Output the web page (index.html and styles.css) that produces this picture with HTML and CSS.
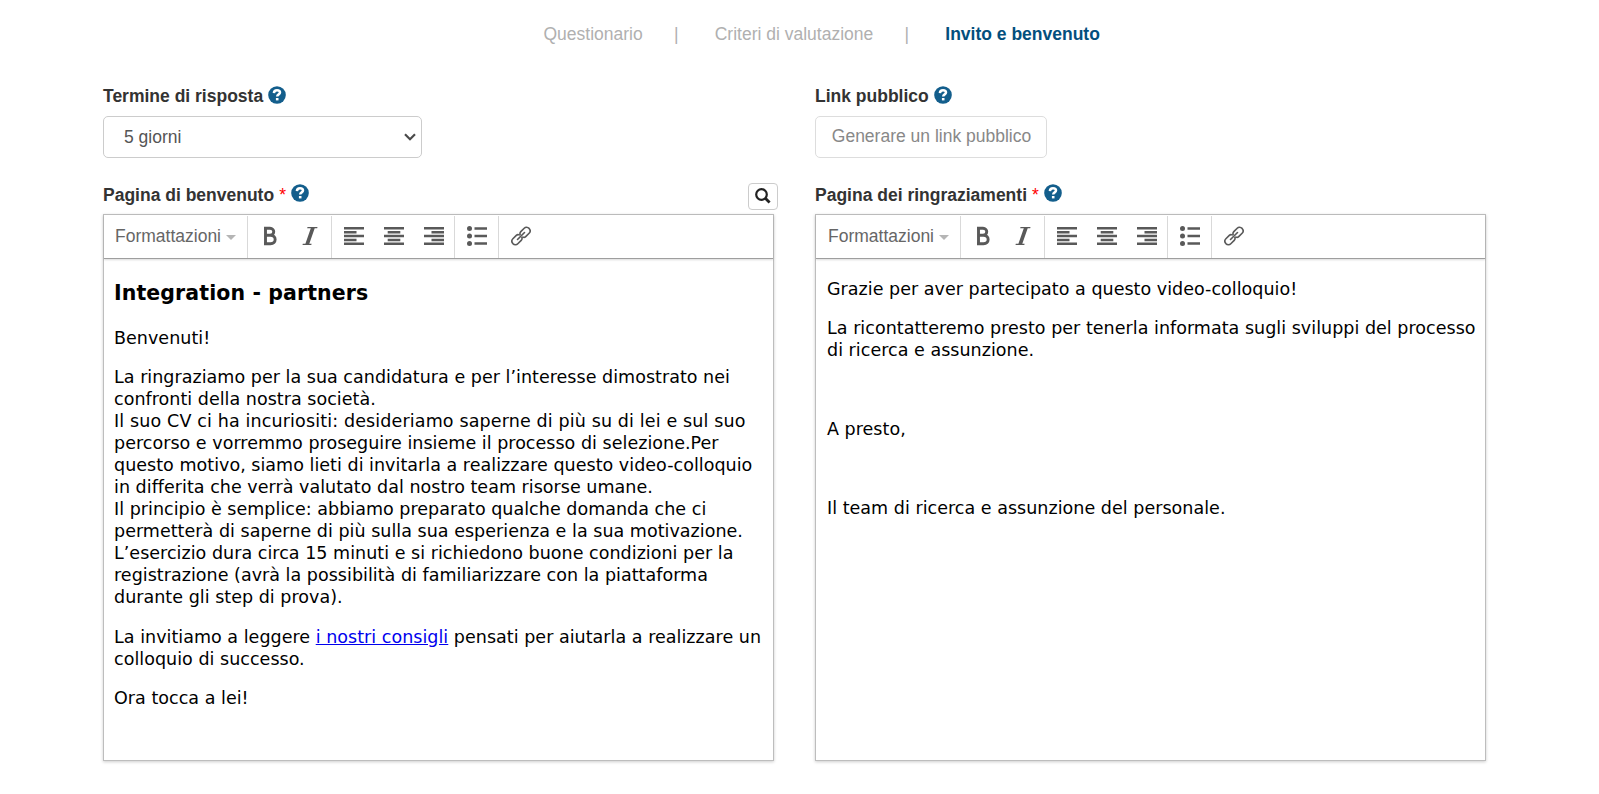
FILE: index.html
```html
<!DOCTYPE html>
<html lang="it">
<head>
  <meta charset="UTF-8">
  <meta name="viewport" content="width=device-width, initial-scale=1.0">
  <title>Invito e benvenuto</title>
  <link rel="stylesheet" href="styles.css">
</head>
<body>

  <!-- Shared icons -->
  <svg class="sprite">
    <symbol id="help" viewBox="0 0 18 18">
      <circle cx="9" cy="9" r="8.8" fill="#135e8c"/>
      <path d="M5.900 7.100C6 4.900 7.300 4.300 9 4.300c1.900 0 3 .9 3 2.300C12 8.500 9.200 8.300 9.200 10.600" fill="none" stroke="#fff" stroke-width="2.500"/>
      <rect x="7.900" y="12" width="2.600" height="2.400" fill="#fff"/>
    </symbol>
    <symbol id="bold" viewBox="0 0 20 20">
      <path d="M5.500 1v18M4 2.300h6c5 0 5 7 0 7H5.500h5c6.200 0 6.200 8.400 0 8.400H4" fill="none" stroke="#595959" stroke-width="2.900"/>
    </symbol>
    <symbol id="italic" viewBox="0 0 20 20">
      <path d="M7.500 1H17.500l-.3 1.200h-2.500L9.300 17.800h2.300l-.3 1.200H2.500l.3-1.200h2.600L10.800 2.200H7.200z" fill="#595959"/>
    </symbol>
    <symbol id="left" viewBox="0 0 20 18">
      <path d="M0 0h20v2.500H0zM0 3.900h12.500v2.500H0zM0 7.800h20v2.500H0zM0 11.700h12.500v2.500H0zM0 15.500h20V18H0z" fill="#595959"/>
    </symbol>
    <symbol id="center" viewBox="0 0 20 18">
      <path d="M0 0h20v2.500H0zM3.700 3.900h12.600v2.500H3.700zM0 7.800h20v2.500H0zM3.700 11.700h12.600v2.500H3.700zM0 15.500h20V18H0z" fill="#595959"/>
    </symbol>
    <symbol id="right" viewBox="0 0 20 18">
      <path d="M0 0h20v2.500H0zM7.500 3.900H20v2.500H7.500zM0 7.800h20v2.500H0zM7.500 11.700H20v2.500H7.500zM0 15.500h20V18H0z" fill="#595959"/>
    </symbol>
    <symbol id="list" viewBox="0 0 20 20">
      <g fill="#595959">
        <circle cx="2.500" cy="2.500" r="2.500"/>
        <circle cx="2.500" cy="10" r="2.500"/>
        <circle cx="2.500" cy="17.500" r="2.500"/>
        <path d="M7.500 1.200H20v2.600H7.500zM7.500 8.700H20v2.600H7.500zM7.500 16.200H20v2.600H7.500z"/>
      </g>
    </symbol>
    <symbol id="link" viewBox="0 0 20 20">
      <g fill="none" stroke="#595959" stroke-width="1.600" stroke-linecap="round">
        <path d="M8.200 8.900C7.200 8.400 6.100 8.600 5.300 9.400L1.900 12.800C.6 14.100.6 16.100 1.900 17.600c1.400 1.500 3.600 1.500 4.900.2l3.400-3.400c.8-.8 1-1.900.7-2.900"/>
        <path d="M11.800 11.100c1 .5 2.100.3 2.900-.5l3.400-3.400c1.300-1.300 1.300-3.300 0-4.800-1.400-1.500-3.600-1.500-4.900-.2L9.800 5.600c-.8.8-1 1.900-.7 2.900"/>
        <path d="M6.500 13.500l7-7"/>
      </g>
    </symbol>
  </svg>

  <div class="steps">
    <span>Questionario</span>
    <span class="sep">|</span>
    <span>Criteri di valutazione</span>
    <span class="sep">|</span>
    <span class="active">Invito e benvenuto</span>
  </div>

  <div class="columns">
    <div class="column">
      <div class="label">Termine di risposta <svg class="help"><use href="#help"/></svg></div>
      <div class="select">
        5 giorni
        <svg class="chevron" viewBox="0 0 12 8"><path d="M1 1.200l5 5 5-5" fill="none" stroke="#4a4a4a" stroke-width="2.200"/></svg>
      </div>

      <div class="label editor-label">
        <span>Pagina di benvenuto</span> <span class="required">*</span> <svg class="help"><use href="#help"/></svg>
        <button class="preview">
          <svg viewBox="0 0 16 16"><g fill="none" stroke="#222" stroke-width="2.200"><circle cx="6.500" cy="6.500" r="5.300"/><path d="M10.300 10.300l4.300 4.300" stroke-width="2.800"/></g></svg>
        </button>
      </div>
      <div class="editor">
        <div class="toolbar">
          <div class="group formats">Formattazioni<span class="caret"></span></div>
          <div class="group bi"><svg><use href="#bold"/></svg><svg><use href="#italic"/></svg></div>
          <div class="group align"><svg><use href="#left"/></svg><svg><use href="#center"/></svg><svg><use href="#right"/></svg></div>
          <div class="group list"><svg><use href="#list"/></svg></div>
          <div class="group link"><svg><use href="#link"/></svg></div>
        </div>
        <div class="content">
          <h3>Integration - partners</h3>
          <p>Benvenuti!</p>
          <p>La ringraziamo per la sua candidatura e per l’interesse dimostrato nei confronti della nostra società.<br>
          <span class="wide">Il suo CV ci ha incuriositi: desideriamo saperne di più su di lei e sul suo</span> percorso e vorremmo proseguire insieme il processo di selezione.Per questo motivo, siamo lieti di invitarla a realizzare questo video-colloquio in differita che verrà valutato dal nostro team risorse umane.<br>
          Il principio è semplice: abbiamo preparato qualche domanda che ci permetterà di saperne di più sulla sua esperienza e la sua motivazione.<br>
          L’esercizio dura circa 15 minuti e si richiedono buone condizioni per la registrazione (avrà la possibilità di familiarizzare con la piattaforma durante gli step di prova).</p>
          <p>La invitiamo a leggere <a href="#">i nostri consigli</a> pensati per aiutarla a realizzare un colloquio di successo.</p>
          <p>Ora tocca a lei!</p>
        </div>
      </div>
    </div>

    <div class="column thanks">
      <div class="label">Link pubblico <svg class="help"><use href="#help"/></svg></div>
      <button class="generate">Generare un link pubblico</button>

      <div class="label editor-label">
        <span>Pagina dei ringraziamenti</span> <span class="required">*</span> <svg class="help"><use href="#help"/></svg>
      </div>
      <div class="editor">
        <div class="toolbar">
          <div class="group formats">Formattazioni<span class="caret"></span></div>
          <div class="group bi"><svg><use href="#bold"/></svg><svg><use href="#italic"/></svg></div>
          <div class="group align"><svg><use href="#left"/></svg><svg><use href="#center"/></svg><svg><use href="#right"/></svg></div>
          <div class="group list"><svg><use href="#list"/></svg></div>
          <div class="group link"><svg><use href="#link"/></svg></div>
        </div>
        <div class="content">
          <p>Grazie per aver partecipato a questo video-colloquio!</p>
          <p>La ricontatteremo presto per tenerla informata sugli sviluppi del processo di ricerca e assunzione.</p>
          <p>&nbsp;</p>
          <p>A presto,</p>
          <p>&nbsp;</p>
          <p>Il team di ricerca e assunzione del personale.</p>
        </div>
      </div>
    </div>
  </div>

</body>
</html>
```

FILE: styles.css
```css
* {
  box-sizing: border-box;
}

body {
  margin: 0;
  height: 794px;
  overflow: hidden;
  background-color: #fff;
  color: #333;
  font-family: "Liberation Sans", Arial, sans-serif;
  font-size: 17.5px;
}

.sprite {
  display: none;
}

.steps {
  display: flex;
  height: 84px;
  padding: 22px 0 0 543.5px;
  line-height: 24px;
  color: #b0b0b0;
  white-space: nowrap;
}

.steps .sep {
  width: 72px;
  text-align: center;
  padding-right: 5px;
}

.steps .active {
  color: #034f7d;
  font-weight: bold;
}

.columns {
  display: flex;
  gap: 41px;
  padding-left: 103px;
}

.column {
  width: 671px;
}

.label {
  display: flex;
  align-items: center;
  gap: 5px;
  height: 24px;
  font-weight: bold;
  white-space: nowrap;
}

.help {
  width: 18px;
  height: 18px;
  margin-top: -2px;
}

.select {
  display: flex;
  align-items: center;
  justify-content: space-between;
  width: 319px;
  height: 42px;
  margin-top: 8px;
  padding: 0 5px 0 20px;
  border: 1px solid #ccc;
  border-radius: 5px;
  color: #555;
}

.chevron {
  width: 12px;
  height: 8px;
}

.generate {
  display: block;
  width: 232px;
  height: 42px;
  margin-top: 8px;
  padding: 0 0 1px 1px;
  border: 1px solid #ddd;
  border-radius: 5px;
  background-color: #fff;
  color: #888;
  font: inherit;
}

.editor-label {
  height: 31px;
  margin-top: 25px;
  padding-bottom: 7px;
}

.editor-label .help {
  margin-top: -4px;
}

.required {
  color: #f00;
  font-weight: normal;
}

.preview {
  display: flex;
  width: 30px;
  height: 27px;
  margin: 3px -4px 0 auto;
  padding: 4px 0 0 6px;
  border: 1px solid #ccc;
  border-radius: 4px;
  background-color: #fff;
}

.preview svg {
  width: 16px;
  height: 16px;
}

.editor {
  height: 547px;
  border: 1px solid #bdbdbd;
  box-shadow: 0 1px 3px rgba(0, 0, 0, 0.2);
}

.toolbar {
  display: flex;
  height: 44px;
  padding-top: 1px;
  border-bottom: 1px solid #9e9e9e;
  box-shadow: 0 1px 2px rgba(0, 0, 0, 0.15);
}

.group {
  display: flex;
  align-items: center;
  padding-bottom: 2px;
  border-left: 1px solid #d9d9d9;
}

.group svg {
  width: 20px;
  height: 20px;
}

.formats {
  width: 143px;
  padding: 0 0 1px 11px;
  border-left: 0;
  color: #666;
}

.thanks .formats {
  width: 144px;
  padding-left: 12px;
}

.caret {
  margin: 2px 0 0 5px;
  border: 5px solid transparent;
  border-top-color: #b5b5b5;
  border-bottom: 0;
}

.bi {
  width: 84px;
  padding-left: 12px;
  gap: 20px;
}

.align {
  width: 123px;
  padding-left: 12px;
  gap: 20px;
}

.align svg {
  height: 18px;
}

.list {
  width: 44px;
  padding-left: 12px;
}

.link {
  padding-left: 12px;
}

.content {
  padding: 18.9px 4px 0 10px;
  color: #000;
  font-family: "DejaVu Sans", Verdana, sans-serif;
  line-height: 22px;
  letter-spacing: 0.03px;
}

.thanks .content {
  padding-left: 11px;
}

.content h3 {
  margin: 2px 0 20.7px;
  font-size: 20.5px;
  line-height: 26px;
  letter-spacing: 0.1px;
}

.content p {
  margin: 0 0 17.5px;
}

.content .wide {
  letter-spacing: 0.14px;
}

.content a {
  color: #00e;
}
```
